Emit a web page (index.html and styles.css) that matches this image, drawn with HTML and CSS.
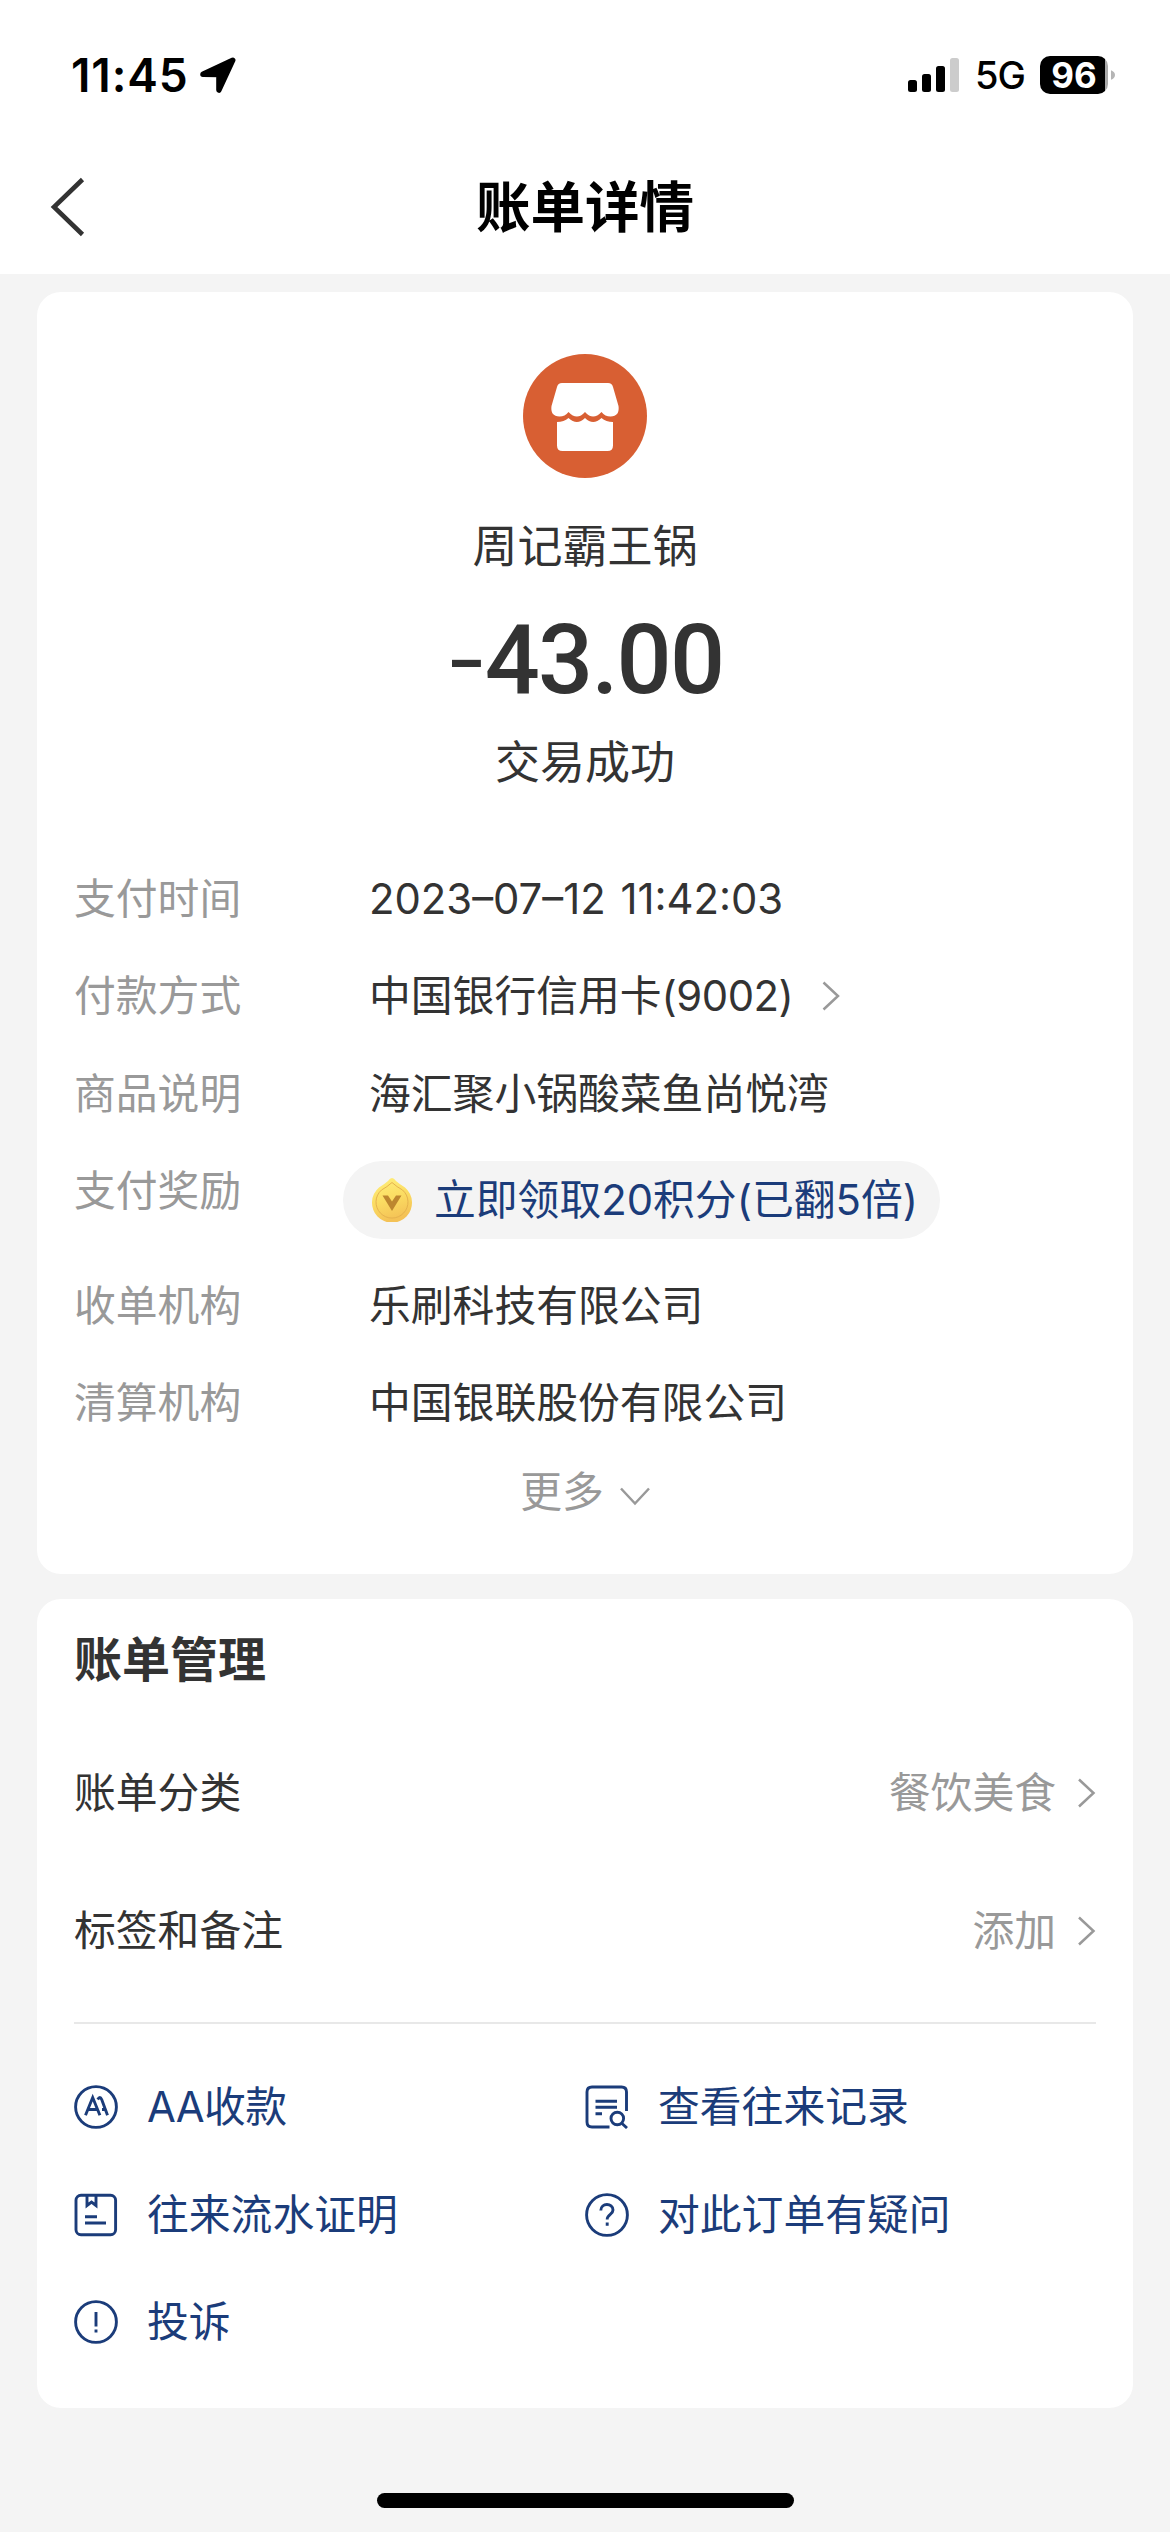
FILE: index.html
```html
<!DOCTYPE html>
<html lang="zh-CN">
<head>
<meta charset="utf-8">
<title>账单详情</title>
<link rel="stylesheet" href="styles.css">
</head>
<body>
<header class="top">
  <div class="status">
    <div class="status-left">
      <span class="clock">11:45</span>
      <svg class="location" viewBox="0 0 36 36"><path d="M2.900 17.300 32.800 3.200 18.900 33.100V17.600Z" fill="#000" stroke="#000" stroke-width="5.400" stroke-linejoin="round"/></svg>
    </div>
    <div class="status-right">
      <svg class="signal" viewBox="0 0 51 34"><rect x="0" y="22" width="9" height="12" rx="2.500"/><rect x="14" y="16" width="9" height="18" rx="2.500"/><rect x="28" y="8" width="9" height="26" rx="2.500"/><rect x="42" y="0" width="9" height="34" rx="2.500" fill="#ccc"/></svg>
      <span class="network">5G</span>
      <span class="battery">96</span>
      <svg class="nub" viewBox="0 0 5 12"><path d="M0 0Q5 2 5 6T0 12Z" fill="#b5b5b5"/></svg>
    </div>
  </div>
  <nav class="nav">
    <svg class="back" viewBox="0 0 36 60"><path d="M33.500 2.500 5 30l28.500 27.500" fill="none" stroke="#333" stroke-width="4.600"/></svg>
    <h1 class="title">账单详情</h1>
  </nav>
</header>

<main class="content">
  <section class="card bill">
    <svg class="shop" viewBox="0 0 124 124">
      <circle cx="62" cy="62" r="62" fill="#d85f33"/>
      <path fill="#fff" d="M39 29H85Q89 29 90 33L95.500 52Q97 62 87.500 62.500Q82 62.500 78.500 58Q70 67 62 58Q54 67 45.500 58Q42 62.500 36.500 62.500Q27 62 28.500 52L34 33Q35 29 39 29Z"/>
      <path fill="#fff" d="M34 68Q41 68 45.500 64Q54 72 62 64Q70 72 78.500 64Q83 68 90 68V91.500Q90 97 84.500 97H39.500Q34 97 34 91.500Z"/>
    </svg>
    <p class="merchant">周记霸王锅</p>
    <p class="amount"><span class="minus">-</span>43.00</p>
    <p class="state">交易成功</p>
    <dl class="details">
      <dt>支付时间</dt><dd class="time">2023–07–12 11:42:03</dd>
      <dt>付款方式</dt><dd>中国银行信用卡<span class="tail">(9002)</span><svg class="arrow pay-arrow" viewBox="0 0 18 30"><path d="M1 1.500 15.500 15 1 28.500"/></svg></dd>
      <dt>商品说明</dt><dd>海汇聚小锅酸菜鱼尚悦湾</dd>
      <dt>支付奖励</dt>
      <dd class="reward">
        <svg class="coin" viewBox="0 0 40 44">
          <defs><linearGradient id="gold" x1="0" y1="0" x2="0.300" y2="1"><stop offset="0" stop-color="#fff07c"/><stop offset="0.550" stop-color="#fbdc62"/><stop offset="1" stop-color="#f4c256"/></linearGradient></defs>
          <path d="M20 0Q22 .2 24 3Q28 6.500 33 9.500A20 20 0 1 1 7 9.500Q12 6.500 16 3Q18 .2 20 0Z" fill="url(#gold)"/>
          <path d="M20 4.500Q25 9 30.500 12A16 16 0 1 1 9.500 12Q15 9 20 4.500Z" fill="none" stroke="#e5b24e" stroke-width="1"/>
          <path d="M10.500 17.500H16L20 23.500 24 17.500H29.500L20 33Z" fill="#bd862f"/>
        </svg>
        <span>立即领取20积分(已翻5倍)</span>
      </dd>
      <dt>收单机构</dt><dd>乐刷科技有限公司</dd>
      <dt>清算机构</dt><dd>中国银联股份有限公司</dd>
    </dl>
    <div class="more">更多<svg class="more-arrow" viewBox="0 0 30 19"><path d="M1 1.500 15 16.500 29 1.500"/></svg></div>
  </section>

  <section class="card manage">
    <h2 class="manage-title">账单管理</h2>
    <div class="setting"><span>账单分类</span><span class="setting-value">餐饮美食<svg class="arrow" viewBox="0 0 18 30"><path d="M1 1.500 15.500 15 1 28.500"/></svg></span></div>
    <div class="setting"><span>标签和备注</span><span class="setting-value">添加<svg class="arrow" viewBox="0 0 18 30"><path d="M1 1.500 15.500 15 1 28.500"/></svg></span></div>
    <div class="actions">
      <a class="action">
        <svg class="icon" viewBox="0 0 44 44"><circle cx="22" cy="22" r="20.400"/><path d="M11.500 30.300 18.700 12.500 25.900 30.300M14.200 24.500H23.200M23.700 14.500Q26 10.500 27.700 14.500L33.500 30.300M28 24.500H31"/></svg>
        <span class="aa">AA收款</span>
      </a>
      <a class="action">
        <svg class="icon" viewBox="0 0 44 44"><path d="M41.500 26V7Q41.500 2 36.500 2H7Q2 2 2 7V37Q2 42 7 42H24.500M10.500 16.300H32M10.500 22.300H32M10.500 28.700H17M37 38.500 42 43"/><circle cx="32.300" cy="33.500" r="6.300"/></svg>
        <span>查看往来记录</span>
      </a>
      <a class="action">
        <svg class="icon" viewBox="0 0 44 44"><rect x="2" y="2.200" width="39.600" height="39.600" rx="5"/><path d="M13 2V12.500L17.500 9 22 12.500V2M11 23.700H23M11 30H32"/></svg>
        <span>往来流水证明</span>
      </a>
      <a class="action">
        <svg class="icon" viewBox="0 0 44 44"><circle cx="22" cy="22" r="20.400"/><path d="M15.800 17.500C15.800 9.500 28 9.800 28 17C28 21.500 22.200 21.300 22.200 26.500M22.200 29.500V32.800"/></svg>
        <span>对此订单有疑问</span>
      </a>
      <a class="action">
        <svg class="icon" viewBox="0 0 44 44"><circle cx="22" cy="22" r="20.400"/><path d="M22 12V26.500M22 29.500V32.500"/></svg>
        <span>投诉</span>
      </a>
    </div>
  </section>
</main>
<footer class="home"><div class="home-bar"></div></footer>
</body>
</html>
```
FILE: styles.css
```css
* { box-sizing: border-box; margin: 0; padding: 0; }

body {
  width: 1170px;
  height: 2532px;
  display: flex;
  flex-direction: column;
  overflow: hidden;
  background: #f4f4f4;
  color: #333;
  font: 400 41.8px/60px Inter, "Noto Sans CJK SC", sans-serif;
}

svg { display: block; flex: none; }

.top { height: 274px; background: #fff; color: #000; }

.status {
  height: 150px;
  padding: 0 55px 0 71px;
  display: flex;
  justify-content: space-between;
}
.status-left, .status-right { height: 150px; display: flex; align-items: center; }
.clock { width: 129px; font-size: 46px; font-weight: 600; letter-spacing: 0.900px; }
.location { width: 36px; height: 36px; }
.signal { width: 51px; height: 34px; margin-right: 16px; }
.network { width: 65px; font-size: 38px; font-weight: 500; letter-spacing: -1px; }
.battery {
  width: 68px;
  height: 38px;
  border-radius: 10px;
  background: linear-gradient(90deg, #000 65px, #aaa 65px);
  color: #fff;
  font-size: 35px;
  font-weight: 700;
  line-height: 38px;
  text-align: center;
}
.nub { width: 4px; height: 12px; margin-left: 3px; }

.nav {
  height: 114px;
  padding: 0 49px;
  display: grid;
  grid-template-columns: 36px 1fr 36px;
  align-items: center;
}
.back { width: 36px; height: 60px; }
.title { font-size: 54.500px; font-weight: 700; text-align: center; }

.content { padding: 18px 37px 0; display: flex; flex-direction: column; gap: 25px; }
.card { padding: 0 37px; border-radius: 24px; background: #fff; }

.bill { height: 1282px; padding-top: 62px; display: flex; flex-direction: column; align-items: center; }
.shop { width: 124px; height: 124px; }
.merchant { margin-top: 39px; font-size: 45px; }
.amount {
  height: 96px;
  margin: 35px 0 0 6px;
  font: 500 97px/96px Roboto, sans-serif;
  letter-spacing: -1.800px;
}
.minus {
  display: inline-block;
  margin-right: 7px;
  font-weight: 400;
  transform: scaleX(1.250);
}
.state { margin-top: 25px; font-size: 45px; }

.details {
  align-self: stretch;
  margin-top: 76px;
  display: grid;
  grid-template-columns: 295px auto;
  row-gap: 37.300px;
  justify-content: start;
}
.details dt { color: #999; }
.details dd { display: flex; align-items: center; }
.details .time { letter-spacing: 0; word-spacing: 3px; }
.tail { letter-spacing: -0.500px; }
.details .reward {
  width: 597px;
  height: 78px;
  margin-left: -26px;
  padding-left: 29px;
  border-radius: 39px;
  gap: 22px;
  background: #f4f4f4;
  color: #1b3c7a;
}
.coin { width: 40px; height: 44px; }

.arrow { width: 18px; height: 30px; fill: none; stroke: #999; stroke-width: 2.500; }
.pay-arrow { width: 21px; margin-left: 28px; }
.more { margin-top: 29px; display: flex; align-items: center; gap: 16px; color: #999; }
.more-arrow { width: 30px; height: 19px; margin-top: 8px; fill: none; stroke: #999; stroke-width: 2.500; }

.manage { height: 809px; padding-top: 31px; }
.manage-title { margin-bottom: 34px; font-size: 48px; font-weight: 700; line-height: 60px; }
.setting { height: 138px; display: flex; align-items: center; justify-content: space-between; }
.setting-value { display: flex; align-items: center; gap: 22px; color: #999; }

.actions {
  margin-top: 22px;
  padding-top: 53px;
  border-top: 2px solid #e8e8e8;
  display: grid;
  grid-template-columns: 1fr 1fr;
  row-gap: 47.500px;
}
.action { display: flex; align-items: center; gap: 29px; color: #1b3c7a; }
.aa { letter-spacing: -0.600px; }
.icon { width: 44px; height: 44px; fill: none; stroke: #1b3c7a; stroke-width: 2.900; }

.home { margin-top: auto; height: 39px; display: flex; justify-content: center; }
.home-bar { width: 417px; height: 15px; border-radius: 8px; background: #000; }
```
